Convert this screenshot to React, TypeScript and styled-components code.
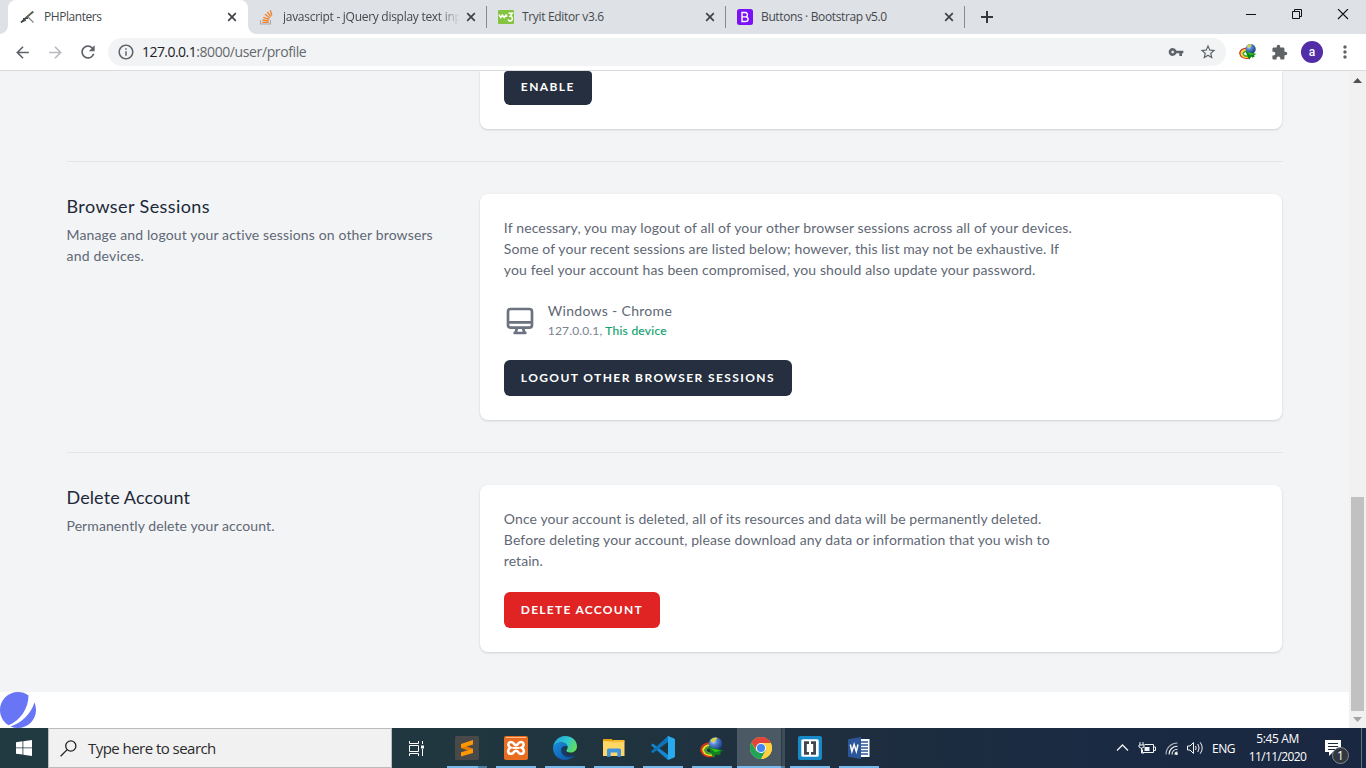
import React from 'react';
import styled, { createGlobalStyle } from 'styled-components';
import {
  MdArrowBack,
  MdArrowForward,
  MdRefresh,
  MdInfoOutline,
  MdVpnKey,
  MdStarBorder,
  MdExtension,
  MdMoreVert,
} from 'react-icons/md';

const uiFont = "'Open Sans', 'Noto Sans', sans-serif";
const pageFont = "Lato, 'Open Sans', sans-serif";

const GlobalStyle = createGlobalStyle`
  * { box-sizing: border-box; }
  body { margin: 0; overflow: hidden; }
  svg { display: block; flex: none; }
  button { border: 0; margin: 0; padding: 0; background: none; font: inherit; color: inherit; }
  h3, p { margin: 0; font-weight: 400; }
`;

const Screen = styled.div`
  display: flex;
  flex-direction: column;
  width: 1366px;
  height: 768px;
  overflow: hidden;
  background: #fff;
  font-family: ${uiFont};
`;

const Tracked = styled.span<{ $track: number }>`
  letter-spacing: ${(p) => p.$track}px;
`;

/* ---------- browser window ---------- */

const TabStrip = styled.div`
  display: flex;
  flex: none;
  height: 34px;
  background: #dee1e6;
`;

const ActiveTab = styled.div`
  display: flex;
  align-items: center;
  width: 240px;
  margin-left: 8px;
  padding: 0 11px 0 12px;
  border-radius: 8px 8px 0 0;
  background: #fff;
  position: relative;

  &::before,
  &::after {
    content: '';
    position: absolute;
    bottom: 0;
    width: 8px;
    height: 8px;
  }
  &::before {
    left: -8px;
    background: radial-gradient(circle at 0 0, transparent 7.5px, #fff 8px);
  }
  &::after {
    right: -8px;
    background: radial-gradient(circle at 100% 0, transparent 7.5px, #fff 8px);
  }
`;

const Tab = styled.div`
  display: flex;
  align-items: center;
  width: 239px;
  padding: 0 10px 0 11px;
  border-right: 1px solid transparent;
  border-image: linear-gradient(transparent 7px, #868b90 7px, #868b90 27px, transparent 27px) 1;
`;

const TabTitle = styled.span<{ $track: number; $fade?: boolean }>`
  flex: 1;
  margin-left: 8px;
  overflow: hidden;
  white-space: nowrap;
  font-size: 12px;
  line-height: 20px;
  color: #45494d;
  letter-spacing: ${(p) => p.$track}px;
  ${(p) =>
    p.$fade &&
    'margin-right: 6px; -webkit-mask-image: linear-gradient(90deg, #000 88%, transparent); mask-image: linear-gradient(90deg, #000 88%, transparent);'}
`;

const NewTab = styled.button`
  display: flex;
  align-items: center;
  margin-left: 16px;
`;

const WindowButtons = styled.div`
  display: flex;
  gap: 34px;
  align-items: flex-start;
  margin-left: auto;
  padding: 9px 17px 0 0;
`;

const Toolbar = styled.div`
  display: flex;
  flex: none;
  align-items: center;
  height: 37px;
  padding: 0 11px 0 13px;
  border-bottom: 1px solid #d9dbde;
  color: #5f6368;
  background: #fff;
`;

const NavButtons = styled.div`
  display: flex;
  flex: none;
  gap: 13.5px;
  width: 95px;
  align-items: center;
`;

const AddressBar = styled.div`
  display: flex;
  flex: none;
  align-items: center;
  width: 1118px;
  height: 28px;
  padding: 0 9px;
  border-radius: 14px;
  background: #f1f3f4;
`;

const Url = styled.div`
  flex: 1;
  margin-left: 7px;
  font-size: 14px;
  line-height: 20px;
  color: #65696e;
`;

const Host = styled(Tracked)`
  color: #202124;
`;

const AddressActions = styled.div`
  display: flex;
  align-items: center;
  gap: 15px;
`;

const Extensions = styled.div`
  display: flex;
  align-items: center;
  margin-left: 13px;
`;

const ExtensionButton = styled.div`
  margin-right: 14px;
`;

const Avatar = styled.div`
  display: grid;
  place-items: center;
  width: 22px;
  height: 22px;
  margin: 0 12px 0 13px;
  border-radius: 50%;
  background: #512da8;
  color: #fff;
  font: 500 12px/20px Roboto, sans-serif;
`;

const Viewport = styled.div`
  display: flex;
  flex: none;
  height: 657px;
`;

const Scrollbar = styled.div`
  display: flex;
  flex-direction: column;
  justify-content: space-between;
  align-items: center;
  width: 17px;
  padding: 7px 0 6px;
  background: #f1f1f1;
`;

const Thumb = styled.div`
  width: 13px;
  height: 214px;
  margin: auto 0 6px;
  background: #c1c1c1;
`;

/* ---------- profile page ---------- */

const Page = styled.main`
  width: 1349px;
  overflow: hidden;
  font-family: ${pageFont};
  background: #fff;
`;

const Profile = styled.div`
  height: 621px;
  padding: 0 66.5px;
  background: #f3f4f6;
`;

const Section = styled.section`
  display: grid;
  grid-template-columns: 389.33px 802px;
  gap: 24px;
`;

const Divider = styled.div`
  height: 1px;
  margin: 32px 0;
  background: #e3e6e9;
`;

const Card = styled.div<{ $continued?: boolean }>`
  padding: ${(p) => (p.$continued ? '0 24px 24px' : '24px')};
  border-radius: ${(p) => (p.$continued ? '0 0 8px 8px' : '8px')};
  background: #fff;
  box-shadow: 0 1px 3px rgba(0, 0, 0, 0.1), 0 1px 2px rgba(0, 0, 0, 0.06);
`;

const Heading = styled.h3`
  margin-top: -1px;
  font-size: 18px;
  line-height: 27px;
  color: #202838;
`;

const Copy = styled.p<{ $gap?: number }>`
  margin-top: ${(p) => p.$gap ?? -1}px;
  padding-bottom: 1px;
  font-size: 14px;
  line-height: 21px;
  white-space: nowrap;
  color: #5f6875;
`;

const Session = styled.div`
  display: flex;
  align-items: center;
  margin-top: 20px;
  height: 39px;
`;

const SessionInfo = styled.div`
  margin-left: 12px;
`;

const Meta = styled.div`
  font-size: 12px;
  line-height: 18px;
  color: #7b838f;
`;

const Current = styled(Tracked)`
  margin-left: 3px;
  color: #0e9f6e;
  -webkit-text-stroke: 0.15px #0e9f6e;
`;

const Action = styled.button<{ $width: number; $track: number; $danger?: boolean; $clipped?: boolean }>`
  display: flex;
  align-items: center;
  width: ${(p) => p.$width}px;
  height: ${(p) => (p.$clipped ? 34 : 36)}px;
  padding: ${(p) => (p.$clipped ? '0 0 2px 17px' : '0 0 0 17px')};
  margin-top: ${(p) => (p.$clipped ? 0 : 20)}px;
  border-radius: ${(p) => (p.$clipped ? '4px 4px 6px 6px' : '6px')};
  background: ${(p) => (p.$danger ? '#e02424' : '#252f3f')};
  color: #fff;
  font: 700 12px/18px ${pageFont};
  letter-spacing: ${(p) => p.$track}px;
  white-space: nowrap;
`;

/* ---------- taskbar ---------- */

const Taskbar = styled.footer`
  display: flex;
  flex: none;
  height: 40px;
  background: linear-gradient(90deg, #213940 0%, #20373f 35%, #1f2f3f 60%, #1a2a42 80%, #1a2741 100%);
  color: #fff;
`;

const Start = styled.button`
  display: grid;
  place-items: center;
  width: 48px;
`;

const Search = styled.div`
  display: flex;
  align-items: center;
  width: 344px;
  padding-left: 11px;
  border: 1px solid #bcbcbc;
  background: #f1f1f1;
  color: #2b2b2b;
  font-size: 15px;
  line-height: 22px;
`;

const SearchLabel = styled(Tracked)`
  margin-left: 11px;
`;

const TaskView = styled.button`
  display: grid;
  place-items: center;
  width: 50px;
  padding-right: 1px;
`;

const TaskbarApp = styled.div<{ $active?: boolean; $stacked?: boolean }>`
  display: flex;
  flex-direction: column;
  align-items: center;
  justify-content: space-between;
  width: 49px;
  padding-top: 8px;
  background: ${(p) =>
    p.$active
      ? 'linear-gradient(90deg, transparent 1px, #4b5964 1px, #4b5964 45px, #293a47 45px, #293a47 46px, #3e4c58 46px)'
      : 'none'};

  &::after {
    content: '';
    width: ${(p) => (p.$active ? 48 : 40)}px;
    height: 2px;
    background: ${(p) =>
      p.$stacked || p.$active
        ? `linear-gradient(90deg, #76b9ed ${p.$active ? 44 : 31}px, #4d7fa2 ${p.$active ? 44 : 31}px)`
        : '#76b9ed'};
  }
`;

const Tray = styled.div`
  display: flex;
  align-items: center;
  margin-left: auto;
  font-size: 12px;
`;

const Lang = styled(Tracked)`
  width: 36px;
  margin-left: 8px;
`;

const Clock = styled.div`
  display: flex;
  flex-direction: column;
  align-items: center;
  width: 59px;
  line-height: 18px;
`;

const Notices = styled.div`
  width: 26px;
  height: 40px;
  margin-left: 17px;
  padding-top: 8px;
`;

const DesktopEdge = styled.div`
  width: 5px;
  height: 40px;
  margin-left: 11px;
  border-left: 1px solid #66707f;
`;

/* ---------- drawings ---------- */

const CloseIcon = () => (
  <svg width="10" height="10" viewBox="0 0 10 10" stroke="#3f4347" strokeWidth="1.7">
    <path d="M1.2 1.2l7.6 7.6M8.8 1.2L1.2 8.8" />
  </svg>
);

const PlanterIcon = () => (
  <svg width="16" height="16" viewBox="0 0 16 16" fill="none">
    <path d="M1 13.5L6 9 13 2.500" stroke="#3c473d" strokeWidth="1.7" />
    <path d="M6 8.500L13.500 3" stroke="#5f6d58" strokeWidth="1.200" />
    <path d="M8 8l5.500 5.500" stroke="#888" strokeWidth="1.2" />
    <path d="M3 9.500h5M2 12.500l4-1" stroke="#444" strokeWidth="1" />
  </svg>
);

const StackIcon = () => (
  <svg width="16" height="16" viewBox="0 0 16 16" fill="none">
    <path d="M1.500 11v4h10v-4" stroke="#a8abae" strokeWidth="1.1" />
    <path d="M3.300 13.300h6.400M3.500 11l6.300.8M4.300 8.300l5.900 2.100M6 5.300l4.900 3.800M8.300 3l3.700 4.700M11.300 1.300l1.500 5.200" stroke="#f48024" strokeWidth="1.300" />
  </svg>
);

const W3Icon = () => (
  <svg width="16" height="14" viewBox="0 0 16 14" fill="none">
    <rect width="16" height="14" rx="1" fill="#85c440" />
    <path d="M1 4.500L2.700 7.500 4.400 5 6.200 7.500 8 5l1.200 1.500" stroke="#fff" strokeWidth="1.500" />
    <path d="M10.500 3.200h3.800L12.300 6.200c2.900 0 2.700 4.800-.1 4.800-1.200 0-1.900-.6-2.200-1.500" stroke="#fff" strokeWidth="1.500" />
  </svg>
);

const BootstrapIcon = () => (
  <svg width="16" height="16" viewBox="0 0 16 16" fill="none">
    <rect width="16" height="16" rx="2.5" fill="#7a11f7" />
    <path d="M5 3.5v9h3.6c3.3 0 3.3-4.6 0-4.6H5h3.3c2.8 0 2.8-4.4 0-4.4H5z" stroke="#fff" strokeWidth="1.4" />
  </svg>
);

const DownloadManagerIcon = ({ size }: { size: number }) => (
  <svg width={size} height={size} viewBox="0 0 24 24" fill="none">
    <defs>
      <radialGradient id={`globe${size}`} cx=".35" cy=".3" r=".75">
        <stop offset="0" stopColor="#cfe2fa" />
        <stop offset=".35" stopColor="#5588cf" />
        <stop offset="1" stopColor="#15347c" />
      </radialGradient>
    </defs>
    <path d="M10 7C3.500 7.500.5 11 1.500 15c1.200 4.300 6.500 6 12 5" stroke="#d9311e" strokeWidth="2" />
    <path d="M10 9C5.500 9.300 2.700 12 3.500 15c1 3 5 4.500 10 3.500" stroke="#f7dc1e" strokeWidth="2.200" />
    <path d="M10 11C7 11.300 5 13 5.700 15c.8 2 4 3 8 2" stroke="#3fa535" strokeWidth="2.200" />
    <circle cx="15.500" cy="8" r="6.800" fill={`url(#globe${size})`} />
    <path d="M10.500 4.500C12 2 14.500 1.200 17 1.800c.5 1.700-1.500 2.200-2 3.200-.7 1.500-3.500 1.500-4.500-.5z" fill="#d9d044" />
    <path d="M8.500 11l15 3.500-3.500 1.500 1 2-3.200 1.500-1.300-1.500-3 4.200z" fill="#12821a" />
    <path d="M10 12l10.500 2.500-5 1.700z" fill="#2fc425" />
  </svg>
);

const DeviceIcon = () => (
  <svg width="32" height="32" viewBox="0 0 24 24" fill="none" stroke="#6b7280" strokeWidth="2" strokeLinecap="round" strokeLinejoin="round">
    <path d="M9.750 17L9 20l-1 1h8l-1-1-.75-3M3 13h18M5 17h14a2 2 0 002-2V5a2 2 0 00-2-2H5a2 2 0 00-2 2v10a2 2 0 002 2z" />
  </svg>
);

const JetMark = () => (
  <svg width="36" height="36" viewBox="0 0 48 48" fill="#6875f5">
    <path d="M11.395 44.428C4.557 40.198 0 32.632 0 24 0 10.745 10.745 0 24 0a23.891 23.891 0 0113.997 4.502c-.2 17.907-11.097 33.245-26.602 39.926z" />
    <path d="M14.134 45.885A23.914 23.914 0 0024 48c13.255 0 24-10.745 24-24 0-3.516-.756-6.856-2.115-9.866-4.659 15.143-16.608 27.092-31.750 31.751z" />
  </svg>
);

const SublimeIcon = () => (
  <svg width="24" height="24" viewBox="0 0 24 24">
    <rect width="24" height="24" rx="1.500" fill="#494949" />
    <path d="M6 8v4l12 4.500v-3.800z" fill="#e07c00" />
    <path d="M6 8l12-4v4.500L6 12z" fill="#ff9800" />
    <path d="M6 16.200l12-3.500V17L6 20.500z" fill="#ff9800" />
  </svg>
);

const XamppIcon = () => (
  <svg width="24" height="24" viewBox="0 0 24 24" fill="none">
    <rect width="24" height="24" rx="2" fill="#e96d20" />
    <path d="M2 1.500h20" stroke="#ffb888" strokeWidth="1" />
    <path d="M8 6.200C4 5.200 3.200 10 6.500 11.700 3 13.500 3.500 18.500 7.500 17.700c2.500-.3 2-3 4.500-3s2 2.700 4.500 3c4 .8 4.500-4.200 1-6 3.300-1.700 2.500-6.500-1.500-5.500-2.200.4-1.700 3-4 3s-1.800-2.600-4-3z" stroke="#fff" strokeWidth="2.600" />
    <path d="M8.500 11.900h7" stroke="#fff" strokeWidth="2" />
  </svg>
);

const EdgeIcon = () => (
  <svg width="24" height="24" viewBox="0 0 24 24">
    <defs>
      <linearGradient id="edgeTop" x1="0" y1=".2" x2="1" y2=".6">
        <stop offset="0" stopColor="#1f9fe3" />
        <stop offset=".55" stopColor="#30c8cf" />
        <stop offset="1" stopColor="#62de5a" />
      </linearGradient>
      <linearGradient id="edgeBase" x1="0" y1="0" x2="1" y2="1">
        <stop offset="0" stopColor="#1a8ddf" />
        <stop offset="1" stopColor="#0c4f9e" />
      </linearGradient>
    </defs>
    <path d="M0 12C.5 5 5.500 0 12 0c7 0 12 4.800 12 10.200 0 4-3 6.300-6.500 6.300-2.700 0-4.200-1-4.200-2 0-.8 1.400-1.300 1.400-3.200C14.700 8.700 12 6.500 8.500 6.500 4 6.500.7 9 0 12z" fill="url(#edgeTop)" />
    <path d="M0 12c.5-3.500 4-5.600 8-5.600 3.600 0 6.500 1.600 6.700 4.700-.5-.7-1.500-1-2.700-1-2.500 0-4 2-3.800 4.600.3 4 4 6.500 8.300 6.300 2.300-.1 4.200-.8 5.800-1.900C20 22 16.300 24 12 24 5 24 0 18.500 0 12z" fill="url(#edgeBase)" />
    <path d="M9.300 11.500c-1.400 1.500-1.500 4-.2 6 1.600 2.700 5 4.200 8.500 3.700 2-.2 3.700-1.200 4.700-2.200-4 1.500-9.500.3-10.400-3.500-.4-1.800.2-3.700 1.400-5-1.500-.4-3-.1-4 1z" fill="#123f83" opacity=".65" />
  </svg>
);

const ExplorerIcon = () => (
  <svg width="24" height="24" viewBox="0 0 24 24">
    <path d="M1 3h9l1.500 2.500H1z" fill="#e5a50a" />
    <path d="M1 5h21.500v15H1z" fill="#ffd766" />
    <path d="M1 5.500h9L11.500 4h11v2L11 6.500z" fill="#f6bd35" />
    <path d="M5 20.700V14q0-1.500 1.500-1.500h11q1.500 0 1.500 1.500v6.700h-3.700V16.500H8.700v4.200z" fill="#3f94dc" />
  </svg>
);

const CodeIcon = () => (
  <svg width="24" height="24" viewBox="0 0 24 24">
    <path d="M0 9.200L1.700 7.600 18 19.500 17 24z" fill="#1488cf" />
    <path d="M0 15.600l1.700 1.600L18 5.300 17 0z" fill="#0e73ba" />
    <path d="M17 0c-.5.800-.4 1.200 0 2v20c-.4.800-.3 1.400 0 2l6.300-2.500.7-1.100V3.500l-.7-1z" fill="#29a9ee" />
  </svg>
);

const ChromeIcon = () => (
  <svg width="24" height="24" viewBox="0 0 24 24">
    <circle cx="12" cy="12" r="11" fill="#ffd23f" />
    <path d="M2.470 6.500A11 11 0 0012 23l5-8.500-9.500.500z" fill="#22a35a" />
    <path d="M12 7h9.800a11 11 0 01-9.800 16l4.700-8.500z" fill="#ffd23f" />
    <path d="M2.470 6.500A11 11 0 0121.800 7H12l-4.500 7z" fill="#e0453a" />
    <circle cx="12" cy="12" r="5.100" fill="#f5f5f5" />
    <circle cx="12" cy="12" r="4" fill="#4285f4" />
  </svg>
);

const BracketsIcon = () => (
  <svg width="24" height="24" viewBox="0 0 24 24" fill="none">
    <rect width="24" height="24" rx="2" fill="#168ac9" />
    <rect x="3.300" y="3.300" width="17.400" height="17.400" rx="1.500" fill="#fff" />
    <path d="M11 6.700H7.400v10.600H11M13 6.700h3.600v10.600H13" stroke="#42474d" strokeWidth="2.800" />
  </svg>
);

const WordIcon = () => (
  <svg width="24" height="24" viewBox="0 0 24 24" fill="none">
    <path d="M12 3h10.500v18H12z" fill="#fff" />
    <path d="M14 6h7M14 9h7M14 12h7M14 15h7M14 18h7" stroke="#2b579a" strokeWidth="1.300" />
    <path d="M1 3.200L14 1v22L1 20.800z" fill="#2b579a" />
    <path d="M3.300 8.500l1.600 7 2.200-7 2.200 7 1.700-7" stroke="#fff" strokeWidth="1.500" />
  </svg>
);

const WindowsIcon = () => (
  <svg width="16" height="16" viewBox="0 0 16 16" fill="#fff">
    <path d="M0 2.200L6.500 1.300v6.200H0zM7.300 1.200L16 0v7.500H7.300zM0 8.300h6.500v6.300L0 13.700zM7.300 8.300H16V16l-8.700-1.200z" />
  </svg>
);

const SearchIcon = () => (
  <svg width="17" height="17" viewBox="0 0 17 17" fill="none" stroke="#222" strokeWidth="1.300">
    <circle cx="10.800" cy="6" r="5.100" />
    <path d="M7.200 9.600L.6 16.200" />
  </svg>
);

const TaskViewIcon = () => (
  <svg width="17" height="15" viewBox="0 0 17 15" fill="none" stroke="#fff">
    <path d="M1.500 0v2.500h9V0M1.500 15v-2.500h9V15M1.500 4.500h9v6h-9zM14.500 0v3M14.500 8v7" />
    <path d="M13 4.500h3v3h-3z" fill="#fff" stroke="none" />
  </svg>
);

const TrayIcons = () => (
  <svg width="88" height="18" viewBox="0 0 88 18" fill="none" stroke="#f1f3f5">
    <path d="M1 11.500l5.500-5.500 5.500 5.500" strokeWidth="1.300" />
    <path d="M28.500 5.500h9v8h-11v-3M38 8h1.500v3.500H38" />
    <path d="M28.500 8h5v4h-5z" fill="#f1f3f5" stroke="none" />
    <path d="M24 3v3M27 3v3M23 6h5v2q-2.500 2.500-5 0zM25.500 9v5H28" />
    <g strokeWidth="1.100">
      <path d="M50 15.500C50 8.500 55.500 4 61.500 4" opacity=".7" />
      <path d="M53 15.500c0-5 3.800-8.300 8.500-8.300M56 15.500c0-3.200 2.500-5.300 5.500-5.300M59 15.500c0-1.500 1.100-2.500 2.500-2.500" />
    </g>
    <circle cx="60.500" cy="14.800" r="1.300" fill="#fff" stroke="none" />
    <path d="M71.500 7H74l3.500-3.500v11L74 11h-2.500z" />
    <path d="M79.500 7q1.300 2 0 4M81.800 5q2.700 4 0 8M84.200 3.300q4 5.700 0 11.400" />
  </svg>
);

const NoticeIcon = () => (
  <svg width="26" height="28" viewBox="0 0 26 28" fill="none">
    <path d="M1 4h16v12H9l-4 4v-4H1z" fill="#fff" />
    <path d="M4 7.500h10M4 10.500h10M4 13.500h7" stroke="#1a2840" />
    <circle cx="16.500" cy="19.500" r="8" fill="#33383e" stroke="#858b92" />
    <text x="16.500" y="23.500" fill="#fff" fontFamily="Open Sans" fontSize="12" textAnchor="middle">1</text>
  </svg>
);

const Arrow = ({ up }: { up?: boolean }) => (
  <svg width="9" height="5" viewBox="0 0 9 5">
    <path d={up ? 'M0 5L4.500 0 9 5z' : 'M0 0h9L4.500 5z'} fill={up ? '#505050' : '#a3a3a3'} />
  </svg>
);

const runningApps = [
  { icon: <SublimeIcon />, stacked: true },
  { icon: <XamppIcon /> },
  { icon: <EdgeIcon /> },
  { icon: <ExplorerIcon /> },
  { icon: <CodeIcon /> },
  { icon: <DownloadManagerIcon size={24} /> },
  { icon: <ChromeIcon />, active: true },
  { icon: <BracketsIcon /> },
  { icon: <WordIcon /> },
];

const tabs = [
  { icon: <StackIcon />, title: 'javascript - jQuery display text inp', track: -0.28, fade: true },
  { icon: <W3Icon />, title: 'Tryit Editor v3.6', track: -0.33 },
  { icon: <BootstrapIcon />, title: 'Buttons · Bootstrap v5.0', track: -0.37 },
];

export default function App() {
  return (
    <Screen>
      <GlobalStyle />
      <TabStrip>
        <ActiveTab>
          <PlanterIcon />
          <TabTitle $track={-0.45}>PHPlanters</TabTitle>
          <CloseIcon />
        </ActiveTab>
        {tabs.map((tab) => (
          <Tab key={tab.title}>
            {tab.icon}
            <TabTitle $track={tab.track} $fade={tab.fade}>
              {tab.title}
            </TabTitle>
            <CloseIcon />
          </Tab>
        ))}
        <NewTab>
          <svg width="12" height="12" viewBox="0 0 12 12" stroke="#35393d" strokeWidth="2">
            <path d="M6 0v12M0 6h12" />
          </svg>
        </NewTab>
        <WindowButtons>
          <svg width="12" height="12" viewBox="0 0 12 12" stroke="#111">
            <path d="M1 5.500h10" />
          </svg>
          <svg width="12" height="12" viewBox="0 0 12 12" fill="none" stroke="#111">
            <path d="M1.500 2.500h7v7h-7zM3.500 2.500v-2h7v7h-2" />
          </svg>
          <svg width="12" height="12" viewBox="0 0 12 12" stroke="#111" strokeWidth="1.100">
            <path d="M1 0l10 10M11 0L1 10" />
          </svg>
        </WindowButtons>
      </TabStrip>
      <Toolbar>
        <NavButtons>
          <MdArrowBack size={19} />
          <MdArrowForward size={19} color="#b9bbbe" />
          <MdRefresh size={20} />
        </NavButtons>
        <AddressBar>
          <MdInfoOutline size={18} />
          <Url>
            <Host $track={-0.55}>127.0.0.1</Host>
            <Tracked $track={-0.39}>:8000/user/profile</Tracked>
          </Url>
          <AddressActions>
            <MdVpnKey size={16} />
            <MdStarBorder size={18} />
          </AddressActions>
        </AddressBar>
        <Extensions>
          <ExtensionButton>
            <DownloadManagerIcon size={18} />
          </ExtensionButton>
          <MdExtension size={17} />
          <Avatar>a</Avatar>
          <MdMoreVert size={20} />
        </Extensions>
      </Toolbar>

      <Viewport>
        <Page>
          <Profile>
            <Section>
              <div />
              <Card $continued>
                <Action $width={88} $track={1.4} $clipped>
                  ENABLE
                </Action>
              </Card>
            </Section>
            <Divider />
            <Section>
              <div>
                <Heading>
                  <Tracked $track={0.4}>Browser Sessions</Tracked>
                </Heading>
                <Copy $gap={4}>
                  <Tracked $track={0.14}>Manage and logout your active sessions on other browsers</Tracked>
                  <br />
                  <Tracked $track={0.2}>and devices.</Tracked>
                </Copy>
              </div>
              <Card>
                <Copy>
                  <Tracked $track={0.136}>
                    If necessary, you may logout of all of your other browser sessions across all of your devices.
                  </Tracked>
                  <br />
                  <Tracked $track={0.11}>
                    Some of your recent sessions are listed below; however, this list may not be exhaustive. If
                  </Tracked>
                  <br />
                  <Tracked $track={0.135}>
                    you feel your account has been compromised, you should also update your password.
                  </Tracked>
                </Copy>
                <Session>
                  <DeviceIcon />
                  <SessionInfo>
                    <Copy>
                      <Tracked $track={0.3}>Windows - Chrome</Tracked>
                    </Copy>
                    <Meta>
                      <Tracked $track={0.15}>127.0.0.1,</Tracked>
                      <Current $track={0.25}>This device</Current>
                    </Meta>
                  </SessionInfo>
                </Session>
                <Action $width={288} $track={1.4}>
                  LOGOUT OTHER BROWSER SESSIONS
                </Action>
              </Card>
            </Section>
            <Divider />
            <Section>
              <div>
                <Heading>
                  <Tracked $track={0.1}>Delete Account</Tracked>
                </Heading>
                <Copy $gap={4}>
                  <Tracked $track={0.09}>Permanently delete your account.</Tracked>
                </Copy>
              </div>
              <Card>
                <Copy>
                  <Tracked $track={0.105}>
                    Once your account is deleted, all of its resources and data will be permanently deleted.
                  </Tracked>
                  <br />
                  <Tracked $track={0.12}>
                    Before deleting your account, please download any data or information that you wish to
                  </Tracked>
                  <br />
                  <Tracked $track={0.05}>retain.</Tracked>
                </Copy>
                <Action $width={156} $track={1.26} $danger>
                  DELETE ACCOUNT
                </Action>
              </Card>
            </Section>
          </Profile>
          <JetMark />
        </Page>
        <Scrollbar>
          <Arrow up />
          <Thumb />
          <Arrow />
        </Scrollbar>
      </Viewport>

      <Taskbar>
        <Start>
          <WindowsIcon />
        </Start>
        <Search>
          <SearchIcon />
          <SearchLabel $track={-0.54}>Type here to search</SearchLabel>
        </Search>
        <TaskView>
          <TaskViewIcon />
        </TaskView>
        {runningApps.map((app, i) => (
          <TaskbarApp key={i} $active={app.active} $stacked={app.stacked}>
            {app.icon}
          </TaskbarApp>
        ))}
        <Tray>
          <TrayIcons />
          <Lang $track={-0.5}>ENG</Lang>
          <Clock>
            <Tracked $track={-0.37}>5:45 AM</Tracked>
            <Tracked $track={-0.61}>11/11/2020</Tracked>
          </Clock>
          <Notices>
            <NoticeIcon />
          </Notices>
          <DesktopEdge />
        </Tray>
      </Taskbar>
    </Screen>
  );
}
